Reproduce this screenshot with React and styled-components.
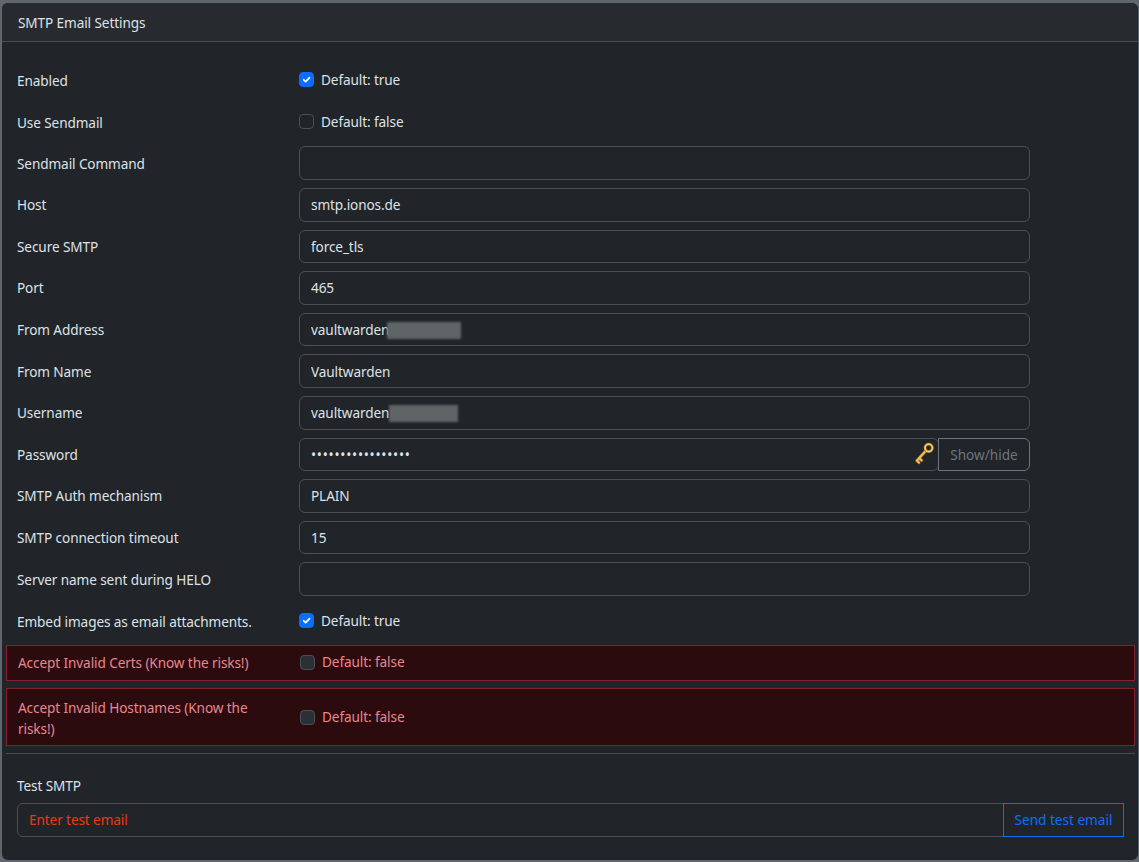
import React from "react";
import styled, { createGlobalStyle } from "styled-components";

const GlobalStyle = createGlobalStyle`
  html, body {
    margin: 0;
    padding: 0;
    background: #5f666d;
  }
  body {
    height: 862px;
    overflow: hidden;
    font-family: "Noto Sans", "Open Sans", sans-serif;
    font-size: 13.6px;
    letter-spacing: -0.1px;
    color: #dee2e6;
  }
`;

const Page = styled.div`
  padding: 3px 1px 2px 2px;
  height: 862px;
  box-sizing: border-box;
`;

const Card = styled.section`
  height: 100%;
  background: #212529;
  border-radius: 6px;
  display: flex;
  flex-direction: column;
`;

const CardHeader = styled.header`
  height: 39px;
  box-sizing: border-box;
  background: #272b30;
  border-bottom: 1px solid #484c50;
  border-radius: 6px 6px 0 0;
  padding: 0 16px;
  display: flex;
  align-items: center;
`;

const CardBody = styled.div`
  padding: 21.2px 3px 0 4px;
  display: flex;
  flex-direction: column;
`;

const Field = styled.div`
  display: grid;
  grid-template-columns: 282px 731px;
  align-items: center;
  padding-left: 11px;
  height: 33.6px;
  margin-bottom: 8px;
`;

const FieldLabel = styled.label`
  line-height: 20px;
  padding-top: ${(p) => (p.$check ? "2px" : "1px")};
`;

const InputWrap = styled.div`
  position: relative;
  display: flex;
  height: 100%;
`;

const TextInput = styled.input`
  flex: 1;
  min-width: 0;
  box-sizing: border-box;
  height: 100%;
  background: #212529;
  color: #dee2e6;
  border: 1px solid #495057;
  border-radius: ${(p) => p.$radius || "6px"};
  padding: 0 11px;
  font: inherit;
  letter-spacing: ${(p) => (p.type === "password" ? "0.75px" : "inherit")};
  outline: none;
  &::placeholder {
    color: #ea3a0c;
    opacity: 1;
  }
`;

const Blurred = styled.span`
  position: absolute;
  left: ${(p) => p.$left}px;
  top: ${(p) => p.$top}px;
  width: ${(p) => p.$width}px;
  height: 17px;
  background: #5f6467;
  filter: blur(1px);
`;

const KeyBadge = styled.span`
  position: absolute;
  right: 94px;
  top: 3px;
  width: 24px;
  height: 24px;
`;

const AddonButton = styled.button`
  width: 92px;
  box-sizing: border-box;
  margin-left: -1px;
  background: transparent;
  color: #6c757d;
  border: 1px solid #6c757d;
  border-radius: 0 6px 6px 0;
  font: inherit;
  padding: 0;
`;

const CheckRow = styled.div`
  display: flex;
  align-items: center;
  gap: 7px;
  margin-top: -1px;
`;

const CheckBox = styled.span`
  width: 15px;
  height: 15px;
  box-sizing: border-box;
  border-radius: 4px;
  display: flex;
  align-items: center;
  justify-content: center;
  background: ${(p) => (p.$checked ? "#0d6efd" : p.$danger ? "#2b3035" : "#212529")};
  border: 1px solid ${(p) => (p.$checked ? "#0d6efd" : "#495057")};
`;

const Alert = styled.div`
  display: grid;
  grid-template-columns: 282px 731px;
  align-items: center;
  box-sizing: border-box;
  min-height: 36px;
  margin-top: ${(p) => (p.$tall ? "0" : "-0.7px")};
  margin-bottom: 7px;
  padding: ${(p) => (p.$tall ? "7.7px" : "6px")} 0 6px 11px;
  background: #2c0b0e;
  border: 1px solid #842029;
  color: #ea868f;
  line-height: 20px;
`;

const AlertLabel = styled.label`
  line-height: ${(p) => (p.$tall ? "21px" : "20px")};
  width: 250px;
`;

const Divider = styled.hr`
  margin: 0;
  border: 0;
  border-top: 1px solid #484c50;
`;

const TestSection = styled.div`
  padding: 22px 11px 0;
`;

const TestLabel = styled.div`
  line-height: 20px;
  margin-bottom: 7px;
`;

const TestGroup = styled.div`
  display: flex;
  height: 34px;
`;

const SendButton = styled.button`
  width: 121px;
  box-sizing: border-box;
  margin-left: -1px;
  background: transparent;
  color: #0d6efd;
  border: 1px solid #0d6efd;
  font: inherit;
  padding: 0;
`;

function Tick() {
  return (
    <svg width="11" height="11" viewBox="0 0 20 20" fill="none">
      <path d="M5 10.5l3.5 3.5L15.5 6.5" stroke="#fff" strokeWidth="3.2" strokeLinecap="round" strokeLinejoin="round" />
    </svg>
  );
}

function KeyIcon() {
  return (
    <svg width="24" height="24" viewBox="0 0 22 22" fill="none">
      <path d="M12.6 9L5 17.4M6.6 15.6l2.2 2.2M4.4 18l2 1.8" stroke="#8f6420" strokeWidth="3" strokeLinecap="round" />
      <path d="M12.6 9L5 17.4M6.6 15.6l2.2 2.2M4.4 18l2 1.8" stroke="#f2bd5a" strokeWidth="1.8" strokeLinecap="round" />
      <circle cx="15.3" cy="6.3" r="3.4" stroke="#9a6e26" strokeWidth="2.6" />
      <circle cx="15.3" cy="6.3" r="3.4" stroke="#f4c765" strokeWidth="1.6" />
    </svg>
  );
}

function Check({ checked, danger, text }) {
  return (
    <>
      <CheckBox $checked={checked} $danger={danger}>
        {checked && <Tick />}
      </CheckBox>
      <span>{text}</span>
    </>
  );
}

function TextField({ label, value, children }) {
  return (
    <Field>
      <FieldLabel>{label}</FieldLabel>
      <InputWrap>
        <TextInput readOnly value={value} />
        {children}
      </InputWrap>
    </Field>
  );
}

function CheckField({ label, checked, text }) {
  return (
    <Field>
      <FieldLabel $check>{label}</FieldLabel>
      <CheckRow>
        <Check checked={checked} text={text} />
      </CheckRow>
    </Field>
  );
}

export default function App() {
  return (
    <Page>
      <GlobalStyle />
      <Card>
        <CardHeader>SMTP Email Settings</CardHeader>
        <CardBody>
          <CheckField label="Enabled" checked text="Default: true" />
          <CheckField label="Use Sendmail" text="Default: false" />
          <TextField label="Sendmail Command" value="" />
          <TextField label="Host" value="smtp.ionos.de" />
          <TextField label="Secure SMTP" value="force_tls" />
          <TextField label="Port" value="465" />
          <TextField label="From Address" value="vaultwarden">
            <Blurred $left={88} $top={9} $width={74} />
          </TextField>
          <TextField label="From Name" value="Vaultwarden" />
          <TextField label="Username" value="vaultwarden">
            <Blurred $left={90} $top={9} $width={69} />
          </TextField>
          <Field>
            <FieldLabel>Password</FieldLabel>
            <InputWrap>
              <TextInput readOnly type="password" value="12345678901234567" />
              <KeyBadge>
                <KeyIcon />
              </KeyBadge>
              <AddonButton>Show/hide</AddonButton>
            </InputWrap>
          </Field>
          <TextField label="SMTP Auth mechanism" value="PLAIN" />
          <TextField label="SMTP connection timeout" value="15" />
          <TextField label="Server name sent during HELO" value="" />
          <CheckField label="Embed images as email attachments." checked text="Default: true" />
          <Alert>
            <AlertLabel>Accept Invalid Certs (Know the risks!)</AlertLabel>
            <CheckRow>
              <Check danger text="Default: false" />
            </CheckRow>
          </Alert>
          <Alert $tall>
            <AlertLabel $tall>Accept Invalid Hostnames (Know the risks!)</AlertLabel>
            <CheckRow>
              <Check danger text="Default: false" />
            </CheckRow>
          </Alert>
          <Divider />
          <TestSection>
            <TestLabel>Test SMTP</TestLabel>
            <TestGroup>
              <TextInput $radius="6px 0 0 6px" placeholder="Enter test email" />
              <SendButton>Send test email</SendButton>
            </TestGroup>
          </TestSection>
        </CardBody>
      </Card>
    </Page>
  );
}
